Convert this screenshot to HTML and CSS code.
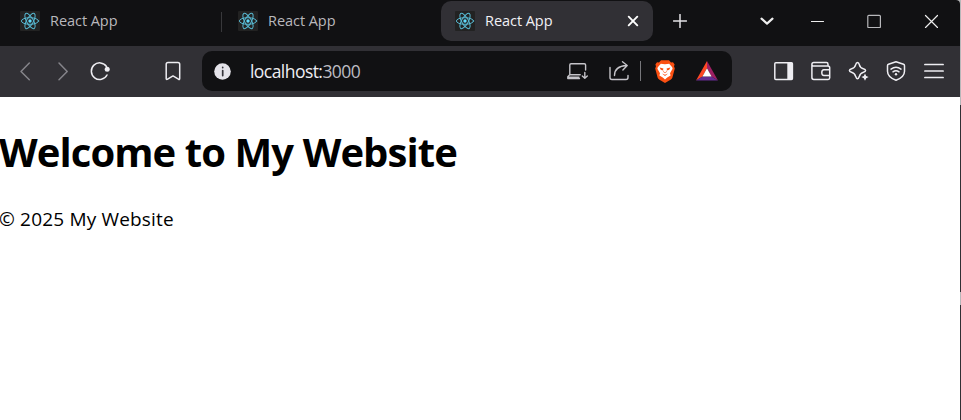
FILE: index.html
```html
<!DOCTYPE html>
<html lang="en">
<head>
<meta charset="utf-8">
<title>React App</title>
<link rel="stylesheet" href="styles.css">
</head>
<body>
<svg class="defs" width="0" height="0">
  <symbol id="react" viewBox="0 0 20 20">
    <rect width="20" height="20" rx="1" fill="#222222"/>
    <g fill="none" stroke="#58b9d2" stroke-width="1">
      <ellipse cx="10" cy="10" rx="8.6" ry="3.3"/>
      <ellipse cx="10" cy="10" rx="8.6" ry="3.3" transform="rotate(60 10 10)"/>
      <ellipse cx="10" cy="10" rx="8.6" ry="3.3" transform="rotate(120 10 10)"/>
    </g>
    <circle cx="10" cy="10" r="1.7" fill="#61dafb"/>
  </symbol>
</svg>
<div class="window">
  <div class="browser">
    <header class="tabstrip">
      <div class="tab first"><svg class="favicon"><use href="#react"/></svg><span class="label">React App</span></div>
      <div class="tab second"><svg class="favicon"><use href="#react"/></svg><span class="label">React App</span></div>
      <div class="tab active"><svg class="favicon"><use href="#react"/></svg><span class="label">React App</span>
        <svg class="close" viewBox="0 0 12 12"><path d="M1.7 1.7l8.6 8.6M10.3 1.7l-8.6 8.6"/></svg>
      </div>
      <svg class="plus" viewBox="0 0 14 14"><path d="M7 .5v13M.5 7h13"/></svg>
      <div class="controls">
        <svg viewBox="0 0 14 14"><path class="bold" d="M1.5 4.6l5.5 5 5.5-5"/></svg>
        <svg viewBox="0 0 14 14"><path d="M.5 7.5h12"/></svg>
        <svg viewBox="0 0 14 14"><rect class="dim" x=".8" y="1.3" width="12.6" height="12.4" rx="1"/></svg>
        <svg viewBox="0 0 14 14"><path d="M1.500 1.500l12 12M13.500 1.500l-12 12"/></svg>
      </div>
    </header>
    <nav class="toolbar">
      <div class="navigation">
        <svg class="icon muted back" viewBox="0 0 24 24"><path d="M16.3 4L8 12.5l8.3 8.3"/></svg>
        <svg class="icon muted forward" viewBox="0 0 24 24"><path d="M8 4l8.2 8.5L8 20.800"/></svg>
        <svg class="icon reload" viewBox="0 0 24 24"><path d="M18.500 7.500A8.300 8.300 0 1 0 19 16"/><circle class="solid" cx="19.200" cy="10.300" r="2.500"/></svg>
        <svg class="icon bookmark" viewBox="0 0 24 24"><path d="M5.2 19.5V5.2q0-1.8 1.8-1.8h9.9q1.8 0 1.8 1.8v14.3q0 1.6-1.3.6L12 16.900l-5.4 3.2q-1.4.9-1.4-.6z"/></svg>
      </div>
      <div class="address">
        <svg class="info" viewBox="0 0 17 17"><circle cx="8.500" cy="8.500" r="8.300" fill="#e4e3e9"/><path d="M8.700 4.300v.3M8.700 7.600v5" stroke="#35343a" stroke-width="1.700"/></svg>
        <span class="url">localhost:<span class="port">3000</span></span>
        <svg class="icon soft" viewBox="0 0 24 24"><path d="M14.500 19.500H2.800v-1.700l2-2.200V6q0-1.200 1.200-1.200h13.300q1.300 0 1.300 1.200v5M4.800 15.800h10.400M3 18.200h11M19.800 13.500v5.500M17.300 17l2.500 2.300 2.500-2.300"/></svg>
        <svg class="icon soft share" viewBox="0 0 24 24"><path d="M3 8.500v10q0 2 2 2h14q2 0 2-2v-2M7.500 16.500c0-6 4-9.500 12.200-10M15.500 2.800l4.700 3.700-4.300 4.500"/></svg>
        <span class="divider"></span>
        <svg class="lion" viewBox="0 0 20 23"><path fill="#fb5012" d="M6 .3h8l2 2.200 2-.2 1.600 2.200-.6 1.700.8 2.400-2.400 9q-.3 1.200-1.500 2L10 23l-5.900-3.400q-1.200-.8-1.500-2l-2.400-9L1 6.200.4 4.500 2 2.300l2 .2z"/><path fill="#fff" d="M5.800 3.700l4.200.6 4.200-.6 3 3.600.4 1.500-2.600 4.400.6 2.200-3.400 2.200L10 19.500l-2.200-1.900-3.400-2.200.6-2.200-2.600-4.400.4-1.500z"/><path fill="#fb5012" d="M4.600 7.600l3.800.8-.6 2-2-.6zM15.400 7.600l-3.800.8.6 2 2-.6zM7 13.500l3 1.200 3-1.200-2.600 2.300h-.8zM8.400 9.200l-.5 2.600 2.100 1.200 2.100-1.200-.5-2.600.1 2.200-1.700.8-1.700-.8z"/></svg>
        <svg class="triangle" viewBox="0 0 22 20"><path fill="#ff4724" d="M11 0L0 19.500l6.500-4L11 7z"/><path fill="#9e1f63" d="M11 0l11 19.500-6.500-4L11 7z"/><path fill="#662d91" d="M0 19.500l6.500-4h9l6.500 4z"/><path fill="#fff" d="M11 7.300l4.600 8.200H6.400z"/></svg>
      </div>
      <div class="actions">
        <svg class="icon" viewBox="0 0 24 24"><rect x="2.800" y="3.800" width="17.600" height="16.600" rx="1"/><path class="solid" d="M15.300 3.800h5v16.600h-5z"/></svg>
        <svg class="icon" viewBox="0 0 24 24"><path d="M19 7V5.200q0-1.600-1.600-1.600H4.800q-1.900 0-1.900 1.800v13.200q0 1.900 1.900 1.900h14.300q1.600 0 1.600-1.700V8.700q0-1.800-1.800-1.800H4.500Q2.900 6.900 2.900 5.400M20.600 10.700h-5.700q-2.100.1-2.100 2.900t2.100 2.800h5.700"/></svg>
        <svg class="icon" viewBox="0 0 24 24"><path d="M10.500 3.400q1.300 0 1.800 2.200c.5 2.300 1.600 3.400 4 4.100q2.300.7 2.300 1.800t-2.200 1.800c-2.300.7-3.400 1.900-4.100 4.300q-.7 2.200-1.800 2.200t-1.800-2.200C8 15.200 6.900 14 4.600 13.300Q2.400 12.600 2.400 11.500t2.300-1.800c2.400-.7 3.400-1.800 4-4.100Q9.200 3.400 10.500 3.400z"/><path class="solid" d="M18 14.500l1.200 2.400 2.400 1.200-2.400 1.200-1.200 2.400-1.200-2.400-2.400-1.200 2.400-1.200z"/></svg>
        <svg class="icon" viewBox="0 0 24 24"><path d="M12 2.700l7.500 2.600q1 .4 1 1.500v5.400q0 5.800-8.500 9-8.500-3.200-8.500-9V6.800q0-1.100 1-1.500zM7 10.100q5-3.600 10 0M9 12.800q3-2.200 6 0"/><circle class="solid" cx="12" cy="15.300" r="1.200"/></svg>
        <svg class="icon" viewBox="0 0 24 24"><path class="menu" d="M2.900 5.500h18.200M2.900 12h18.200M2.900 18.500h18.200"/></svg>
      </div>
    </nav>
    <main class="page">
      <h1>Welcome to My Website</h1>
      <footer>© 2025 My Website</footer>
    </main>
  </div>
  <div class="edge"></div>
</div>
</body>
</html>
```
FILE: styles.css
```css
* { box-sizing: border-box; }
body { margin: 0; background: #fff; font-family: "Open Sans", "Noto Sans", sans-serif; overflow: hidden; }
svg { display: block; flex: none; fill: none; stroke-linecap: round; stroke-linejoin: round; }
.defs { position: absolute; }
.window { display: flex; height: 420px; background: #b7b7b9; }
.browser { width: 960px; display: flex; flex-direction: column; background: #fff; border-top-right-radius: 4px; overflow: hidden; }
.edge { width: 1px; background: linear-gradient(#b7b7b9 105px, #303034 105px 292px, #b7b7b9 292px 305px, #303034 305px); }

.tabstrip { height: 46px; flex: none; display: flex; align-items: flex-start; padding-top: 1px; background: #111113; }
.tab { height: 40px; display: flex; align-items: center; color: #b9b8bc; }
.first { width: 222px; padding-left: 20px; background: linear-gradient(#38383b, #38383b) 221px 11px / 1px 20px no-repeat; }
.second { width: 219px; padding-left: 16px; }
.active { width: 212px; padding: 0 14px; border-radius: 10px; background: #313035; color: #f2f1f5; }
.favicon { width: 20px; height: 20px; }
.label { margin-left: 10px; font-size: 14.5px; letter-spacing: -.05px; line-height: 20px; white-space: nowrap; }
.close { width: 12px; height: 12px; margin-left: auto; stroke: #fff; stroke-width: 1.9; }
.plus { width: 14px; height: 14px; margin: 13px 0 0 20px; stroke: #e3e2e6; stroke-width: 1.5; }
.controls { display: flex; margin: 13px 0 0 73px; gap: 41px; stroke: #eee; stroke-width: 1.2; }
.controls svg { width: 14px; height: 14px; }
.controls svg:nth-child(2) { margin-left: -4px; }
.controls svg:nth-child(3) { margin-left: 1px; }
.controls svg:nth-child(4) { margin-left: 2px; }
.bold { stroke-width: 2.1; }
.dim { stroke: #b8b8bb; }

.toolbar { height: 51px; flex: none; display: flex; align-items: center; background: #313035; padding-bottom: 1px; }
.icon { width: 24px; height: 24px; stroke: #eeedf2; stroke-width: 1.5; }
.solid { fill: #eeedf2; stroke: none; }
.navigation { width: 202px; display: flex; padding-left: 13px; }
.muted { stroke: #85848a; }
.forward { margin-left: 14px; }
.reload { margin-left: 13px; }
.bookmark { margin-left: 49px; }
.address { width: 530px; height: 40px; padding: 0 14px 0 12px; display: flex; align-items: center; border-radius: 10px; background: #111113; }
.info { width: 17px; height: 17px; margin-top: 1px; }
.url { margin: 0 auto 0 19px; font-size: 17.5px; letter-spacing: -.55px; line-height: 24px; color: #eeedf2; }
.port { color: #bdbcc2; }
.soft { stroke: #c5c4c9; stroke-width: 1.4; }
.share { margin-left: 18px; }
.divider { width: 1px; height: 20px; margin: 0 14px 0 9px; background: #77777b; }
.lion { width: 20px; height: 23px; }
.triangle { width: 22px; height: 20px; margin: 0 0 0 21px; }
.actions { width: 228px; display: flex; gap: 13.5px; padding-left: 39.500px; }
.menu { stroke-width: 1.7; }

.page { color: #000; }
h1 { margin: 30px 0 0 -1px; font-size: 40px; line-height: 50px; font-weight: 700; letter-spacing: -.92px; white-space: nowrap; }
footer { margin: 29px 0 0 -1px; font-size: 19px; line-height: 26px; letter-spacing: .18px; white-space: nowrap; }
```
